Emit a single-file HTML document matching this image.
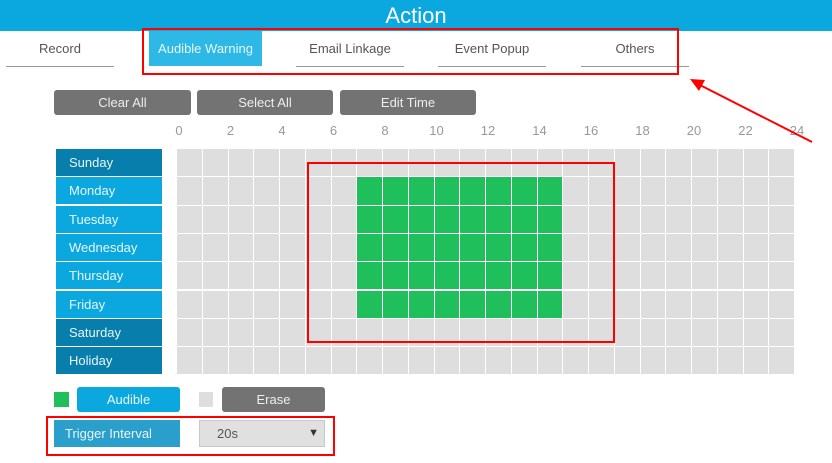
<!DOCTYPE html>
<html><head><style>
body{margin:0;width:832px;height:463px;background:#fff;position:relative;overflow:hidden;font-family:"Liberation Sans",sans-serif;}
.a{position:absolute;}
.hdr{left:0;top:0;width:832px;height:31px;background:#0ba8e0;color:#fff;font-size:22px;text-align:center;line-height:31px;}
.tab{top:31px;height:35px;line-height:36px;font-size:13px;color:#555;text-align:center;border-bottom:1px solid #999;}
.btn{top:90px;height:25px;line-height:25px;background:#737373;color:#eee;font-size:13px;text-align:center;border-radius:3px;}
.hr{top:123px;font-size:13px;color:#999;width:30px;text-align:center;}
.day{left:56px;width:106px;height:27px;line-height:27px;color:#e8f6fc;font-size:13px;padding-left:13px;box-sizing:border-box;}
.cell{width:24.75px;height:27.3px;background:#dedede;}
.rb{border:2px solid #f00;box-sizing:border-box;}
</style></head><body>
<div class="a hdr">Action</div>
<div class="a tab" style="left:6px;width:108px">Record</div>
<div class="a tab" style="left:149px;width:113px;background:#2db8e6;color:#e8f8fd;border-bottom:none;height:35px">Audible Warning</div>
<div class="a tab" style="left:296px;width:108px">Email Linkage</div>
<div class="a tab" style="left:438px;width:108px">Event Popup</div>
<div class="a tab" style="left:581px;width:108px">Others</div>
<div class="a btn" style="left:54px;width:137px">Clear All</div>
<div class="a btn" style="left:197px;width:136px">Select All</div>
<div class="a btn" style="left:340px;width:136px">Edit Time</div>
<div id="hrs"></div>
<div id="grid"></div>
<div class="a" style="left:54px;top:392px;width:15px;height:15px;background:#1fbf5c"></div>
<div class="a btn" style="left:77px;top:387px;width:103px;background:#0ba8e0;color:#e8f8fd">Audible</div>
<div class="a" style="left:199px;top:392px;width:14px;height:15px;background:#dedede"></div>
<div class="a btn" style="left:222px;top:387px;width:103px">Erase</div>
<div class="a" style="left:54px;top:420px;width:126px;height:27px;background:#2a9fcb;color:#e8f6fc;font-size:13px;line-height:27px;padding-left:11px;box-sizing:border-box">Trigger Interval</div>
<div class="a" style="left:199px;top:420px;width:126px;height:27px;background:#e0e0e0;border:1px solid #c8c8c8;box-sizing:border-box;font-size:13px;line-height:25px;padding-left:17px;color:#555">20s<span style="position:absolute;right:5px;top:0;font-size:11px;color:#333">▼</span></div>
<div class="a rb" style="left:142px;top:28px;width:537px;height:47px"></div>
<div class="a rb" style="left:307px;top:162px;width:308px;height:181px"></div>
<div class="a rb" style="left:46px;top:416px;width:289px;height:40px"></div>
<svg class="a" style="left:0;top:0" width="832" height="463"><line x1="812" y1="142" x2="698" y2="84" stroke="#f00" stroke-width="2"/><polygon points="690,79 705,80 699,91" fill="#f00"/></svg>
<script>
var g='',days=['Sunday','Monday','Tuesday','Wednesday','Thursday','Friday','Saturday','Holiday'];
for(var r=0;r<8;r++){var y=149+r*28.3;
var c=(r==0||r>=6)?'#077eab':'#0ba8e0';
g+='<div class="a day" style="top:'+y+'px;background:'+c+'">'+days[r]+'</div>';
for(var k=0;k<24;k++){var x=177+k*25.75;var green=(r>=1&&r<=5&&k>=7&&k<15);
g+='<div class="a cell" style="left:'+x+'px;top:'+y+'px;background:'+(green?'#1fbf5c':'#dedede')+'"></div>';}}
document.getElementById('grid').innerHTML=g;
var h='';for(var i=0;i<=12;i++){h+='<div class="a hr" style="left:'+(164+i*51.5)+'px">'+(i*2)+'</div>';}
document.getElementById('hrs').innerHTML=h;
</script>
</body></html>
